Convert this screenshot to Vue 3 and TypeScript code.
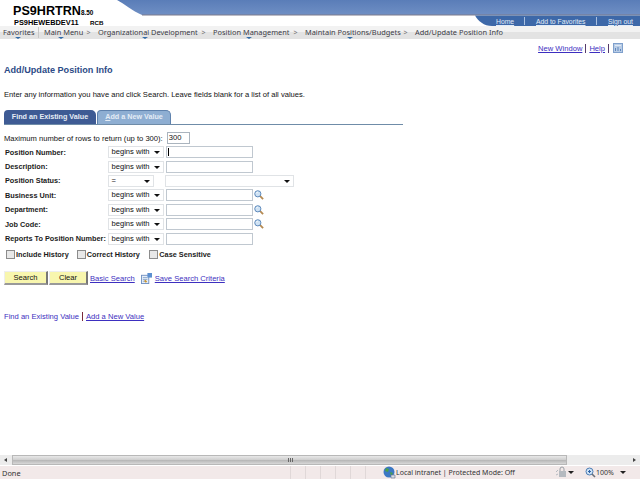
<script setup lang="ts">
const crumbs = [
  { label: 'Main Menu', w: 'c1' },
  { label: 'Organizational Development', w: 'c2' },
  { label: 'Position Management', w: 'c3' },
  { label: 'Maintain Positions/Budgets', w: 'c4' },
]
const rows = [
  { label: 'Position Number:', op: 'begins with', search: false, focus: true },
  { label: 'Description:', op: 'begins with', search: false, focus: false },
  { label: 'Position Status:', op: '=', search: false, focus: false, status: true },
  { label: 'Business Unit:', op: 'begins with', search: true, focus: false },
  { label: 'Department:', op: 'begins with', search: true, focus: false },
  { label: 'Job Code:', op: 'begins with', search: true, focus: false },
  { label: 'Reports To Position Number:', op: 'begins with', search: false, focus: false },
]
const checks = ['Include History', 'Correct History', 'Case Sensitive']
</script>

<template>
  <div class="window">
    <div class="page">
      <header class="top">
        <svg class="band" width="640" height="27" viewBox="0 0 640 27" aria-hidden="true">
          <defs>
            <linearGradient id="bg" x1="0" y1="0" x2="0" y2="1">
              <stop offset="0" stop-color="#5a7db8" />
              <stop offset="1" stop-color="#6f8fc4" />
            </linearGradient>
          </defs>
          <path d="M117 0 C125 4 132 11 142 15 L640 15 L640 0 Z" fill="url(#bg)" />
          <path d="M142 15 L640 15" stroke="#7d7a8c" stroke-width="1" />
          <path d="M475 15.5 L640 15.5 L640 26 L492 26 C484 26 478 21 475 15.5 Z" fill="#3d68a8" />
        </svg>
        <div class="brand">
          <div class="brand1"><span class="sys">PS9HRTRN</span><span class="ver">8.50</span></div>
          <div class="brand2"><span class="host">PS9HEWEBDEV11</span><span class="rcb">RCB</span></div>
        </div>
        <nav class="toplinks">
          <a class="tl tl1">Home</a><i></i><a class="tl tl2">Add to Favorites</a><i></i><a class="tl tl3">Sign out</a>
        </nav>
      </header>

      <div class="crumbs">
        <span class="crumb fav">Favorites<b></b></span>
        <span class="sep"></span>
        <template v-for="c in crumbs" :key="c.label">
          <span class="crumb" :class="c.w">{{ c.label }}<b></b></span>
          <span class="chev">&gt;</span>
        </template>
        <span class="crumb last">Add/Update Position Info</span>
      </div>

      <div class="util">
        <a class="link">New Window</a><span class="bar"></span><a class="link">Help</a><span class="bar"></span>
        <svg class="newwin" width="10" height="10" viewBox="0 0 10 10" aria-hidden="true">
          <rect x="0.5" y="0.5" width="9" height="9" fill="#b9cde6" stroke="#7fa0cc" />
          <rect x="2" y="2" width="6" height="1" fill="#dfe9f5" />
          <path d="M2.5 8V5M5 8V4M7.5 8V6" stroke="#5f86bd" />
        </svg>
      </div>

      <main class="content">
        <h1 class="title">Add/Update Position Info</h1>
        <p class="intro">Enter any information you have and click Search. Leave fields blank for a list of all values.</p>

        <div class="tabs">
          <div class="tab on">Find an Existing Value</div>
          <div class="tab off"><u>A</u>dd a New Value</div>
        </div>

        <div class="max">
          <span>Maximum number of rows to return (up to 300):</span>
          <span class="input maxin">300</span>
        </div>

        <div class="form">
          <div v-for="r in rows" :key="r.label" class="row">
            <label class="lbl">{{ r.label }}</label>
            <span class="sel" :class="{ narrow: r.status }">{{ r.op }}<b></b></span>
            <span v-if="r.status" class="sel wide"><b></b></span>
            <span v-else class="input field" :class="{ focus: r.focus }"></span>
            <svg v-if="r.search" class="lens" width="10" height="10" viewBox="0 0 11 11" aria-hidden="true">
              <path d="M6.5 6.5L10 10" stroke="#b58a52" stroke-width="2" />
              <circle cx="4.2" cy="4.2" r="3.4" fill="#cfe2f4" stroke="#4f7fb5" />
              <path d="M2.5 3.6a2 2 0 0 1 1.6-1.3" stroke="#fff" fill="none" />
            </svg>
          </div>
        </div>

        <div class="checks">
          <label v-for="c in checks" :key="c" class="check"><span class="box"></span>{{ c }}</label>
        </div>

        <div class="actions">
          <button class="btn search">Search</button>
          <button class="btn clear">Clear</button>
          <a class="link basic">Basic Search</a>
          <svg class="save" width="11" height="11" viewBox="0 0 12 12" aria-hidden="true">
            <rect x="0.5" y="2.5" width="8" height="9" fill="#e6eef8" stroke="#6f8fc0" />
            <path d="M2 5h5M2 7h5M2 9h3" stroke="#8aa5cc" />
            <rect x="7" y="0" width="5" height="5" fill="#5b8fd0" />
            <path d="M4 8l2 2" stroke="#c9952f" stroke-width="2" />
          </svg>
          <a class="link">Save Search Criteria</a>
        </div>

        <div class="foot">
          <a class="plain">Find an Existing Value</a><span class="bar red"></span><a class="link">Add a New Value</a>
        </div>
      </main>
    </div>

    <div class="hscroll">
      <span class="arrow left"></span>
      <div class="thumb"><span class="grip"></span></div>
      <span class="arrow right"></span>
    </div>

    <footer class="status">
      <span class="done">Done</span>
      <span class="cell c-a"></span><span class="cell"></span><span class="cell"></span><span class="cell"></span><span class="cell"></span><span class="cell"></span>
      <svg class="globe" width="13" height="13" viewBox="0 0 13 13" aria-hidden="true">
        <circle cx="6" cy="6" r="5.5" fill="#3b78c4" />
        <path d="M3 2l3 1-1 3-3-1zM7 6l3 1-2 3z" fill="#4aa04a" />
        <path d="M8 9h4v3H8z" fill="#d8dde6" stroke="#67708a" stroke-width="0.6" />
      </svg>
      <span class="zone">Local intranet | Protected Mode: Off</span>
      <svg class="lock" width="11" height="12" viewBox="0 0 11 12" aria-hidden="true">
        <path d="M4 5V3a2 2 0 0 1 4 0v2" fill="none" stroke="#9aa0a6" />
        <rect x="3" y="5" width="7" height="6" fill="#b5bac0" />
        <path d="M0 6l2-2M0 9l2-1" stroke="#b5bac0" />
      </svg>
      <b class="drop d1"></b>
      <svg class="zoomi" width="11" height="11" viewBox="0 0 11 11" aria-hidden="true">
        <circle cx="4.5" cy="4.5" r="3.5" fill="#cfe2f4" stroke="#4f7fb5" />
        <path d="M7 7l3 3" stroke="#6a6f78" stroke-width="1.6" />
        <path d="M3 4.5h3M4.5 3v3" stroke="#2f63a8" />
      </svg>
      <span class="pct">100%</span>
      <b class="drop d2"></b>
    </footer>
  </div>
</template>

<style>
html, body { margin: 0; padding: 0; background: #fff; }
</style>

<style scoped>
.window {
  width: 640px; height: 480px; display: flex; flex-direction: column; overflow: hidden;
  font-family: "Liberation Sans", Arial, sans-serif; font-size: 7.6px; color: #111; background: #fff;
}
.page { flex: 1; min-height: 0; }
.top { height: 26px; position: relative; }
.band { position: absolute; left: 0; top: 0; }
.brand { position: relative; padding: 5px 0 0 13px; font-weight: bold; color: #000; }
.brand1 { display: flex; align-items: baseline; height: 12px; line-height: 12px; }
.sys { font-size: 12.6px; }
.ver { font-size: 6.4px; }
.brand2 { display: flex; height: 9px; line-height: 9px; margin-top: 1px; font-size: 7.4px; }
.host { width: 64px; margin-left: 1px; white-space: nowrap; }
.rcb { margin-left: 12px; font-size: 6.2px; }
.toplinks { position: absolute; left: 475px; top: 16px; width: 165px; height: 10px; display: flex; align-items: center; font-size: 6.8px; }
.toplinks i { width: 1px; height: 8px; background: #a9c0e0; flex: none; }
.tl { text-decoration: underline; color: #e2ecf8; white-space: nowrap; }
.tl1 { margin-left: 21px; width: 28px; }
.tl2 { margin-left: 11px; width: 60px; }
.tl3 { margin-left: 11px; }
.crumbs {
  height: 13px; background: linear-gradient(#f2f2f2 0 50%, #e3e3e3 50%); display: flex; align-items: center;
  font-family: "Noto Sans", sans-serif; font-size: 7.4px; color: #3c3c46; white-space: nowrap;
}
.crumb { position: relative; display: block; line-height: 13px; flex: none; }
.crumb b { position: absolute; top: 11px; margin-left: -3px; border: 3px solid transparent; border-top: 2px solid #2f6aa8; border-bottom: 0; }
.fav { margin-left: 3px; width: 35px; }
.fav b { left: 15px; }
.sep { width: 1px; height: 11px; background: #c8c8c8; margin-right: 5px; flex: none; }
.chev { width: 19px; text-align: center; color: #777; font-size: 7px; flex: none; }
.c1 { width: 35px; }
.c1 b { left: 17px; }
.c2 { width: 96px; }
.c2 b { left: 47px; }
.c3 { width: 73px; }
.c3 b { left: 36px; }
.c4 { width: 91px; }
.c4 b { left: 45px; }
.util { height: 16px; display: flex; justify-content: flex-end; align-items: center; padding-right: 17px; margin-top: 1px; }
.newwin { margin-left: 1px; }
.link { color: #3d2fc0; text-decoration: underline; white-space: nowrap; }
.plain { color: #3d2fc0; white-space: nowrap; }
.bar { width: 1px; height: 9px; background: #553a6b; margin: 0 3px; flex: none; }
.bar.red { background: #7a2a3a; }
.content { padding: 0 4px; }
.title { margin: 0; font-size: 9.1px; line-height: 12px; color: #2c4a86; padding-top: 8px; font-weight: bold; }
.intro { margin: 13px 0 0; line-height: 12px; }
.tabs { margin-top: 9px; height: 14px; width: 399px; display: flex; border-bottom: 1px solid #6f8ca8; }
.tab { height: 14px; line-height: 14px; border-radius: 4px 5px 0 0; font-weight: bold; font-size: 7.2px; box-sizing: border-box; text-align: center; white-space: nowrap; }
.on { width: 92px; background: #3e5b94; color: #e6edf6; }
.off { width: 74px; margin-left: 1px; background: #8eaed2; color: #e4ecf5; border: 1px solid #5f82ad; border-bottom: 0; line-height: 12px; }
.max { display: flex; align-items: center; height: 14px; margin-top: 6px; gap: 4px; }
.input { display: block; height: 12px; box-sizing: border-box; border: 1px solid #c0c8d0; background: #fff; }
.maxin { width: 23px; line-height: 10px; padding-left: 1px; border-color: #aab4be; flex: none; }
.row { display: flex; align-items: center; height: 14.4px; }
.lbl { width: 103.5px; padding-left: 1px; box-sizing: border-box; font-weight: bold; white-space: nowrap; color: #1c1c1c; font-size: 7.3px; flex: none; }
.sel { position: relative; display: block; width: 56px; height: 12px; line-height: 10px; box-sizing: border-box; border: 1px solid #e0e3e6; padding-left: 3px; background: #fff; white-space: nowrap; flex: none; }
.sel b { position: absolute; right: 3px; top: 4px; border: 3px solid transparent; border-top: 3px solid #111; border-bottom: 0; }
.sel.narrow { width: 46px; margin-right: 11px; }
.sel.wide { width: 129px; }
.field { width: 87px; margin-left: 2px; flex: none; }
.focus::before { content: ""; display: block; width: 1px; height: 8px; background: #000; margin: 1px 0 0 1px; }
.lens { margin-left: 1px; flex: none; }
.checks { display: flex; height: 15px; align-items: center; margin-top: 1px; padding-left: 2px; font-weight: bold; color: #1c1c1c; font-size: 7.3px; }
.check { display: flex; align-items: center; margin-right: 8px; white-space: nowrap; }
.check:nth-child(2) { margin-right: 9.5px; }
.box { width: 7px; height: 7px; border: 1px solid #8c8c8c; background: #e8e8e8; margin-right: 1px; }
.actions { display: flex; align-items: center; margin-top: 9px; height: 15px; }
.btn { height: 14px; padding: 0; font: inherit; color: #111; background: #f8f6ae; border: 0; border-right: 2px solid #777; border-bottom: 2px solid #999; border-top: 1px solid #eee; border-left: 1px solid #eee; box-sizing: border-box; }
.search { width: 44px; }
.clear { width: 39px; margin-left: 1px; }
.basic { margin-left: 2px; }
.save { margin: 0 3px 0 6px; }
.foot { display: flex; align-items: center; margin-top: 25px; height: 12px; }
.hscroll { height: 10px; display: flex; background: #ececec; margin-bottom: 1px; flex: none; }
.arrow { width: 12px; flex: none; position: relative; }
.arrow.right { margin-left: auto; }
.arrow.left::after { content: ""; position: absolute; left: 4px; top: 3px; border: 2.5px solid transparent; border-right: 3px solid #444; border-left: 0; }
.arrow.right::after { content: ""; position: absolute; right: 4px; top: 3px; border: 2.5px solid transparent; border-left: 3px solid #444; border-right: 0; }
.thumb { width: 555px; background: linear-gradient(#e8e8e8, #d0d0d0 45%, #b8b8b8 55%, #d8d8d8); border: 1px solid #b8b8b8; box-sizing: border-box; position: relative; }
.grip { position: absolute; left: 275px; top: 2px; width: 5px; height: 4px; background: repeating-linear-gradient(90deg, #666 0 1px, transparent 1px 2px); }
.status { height: 13px; margin-bottom: 1px; flex: none; background: #f2e9e9; display: flex; align-items: center; position: relative; font-family: "Noto Sans", sans-serif; font-size: 7px; color: #333; }
.done { position: absolute; left: 2px; font-size: 7.4px; }
.cell { width: 1px; height: 13px; background: #e0d8d8; margin-right: 14px; flex: none; }
.c-a { margin-left: 290px; }
.globe { position: absolute; left: 383px; top: 0; }
.zone { position: absolute; left: 396px; white-space: nowrap; }
.lock { position: absolute; left: 556px; top: 0; }
.drop { position: absolute; border: 3px solid transparent; border-top: 3px solid #222; border-bottom: 0; top: 5px; }
.d1 { left: 568px; }
.d2 { left: 620px; }
.zoomi { position: absolute; left: 585px; top: 1px; }
.pct { position: absolute; left: 596px; }
</style>
